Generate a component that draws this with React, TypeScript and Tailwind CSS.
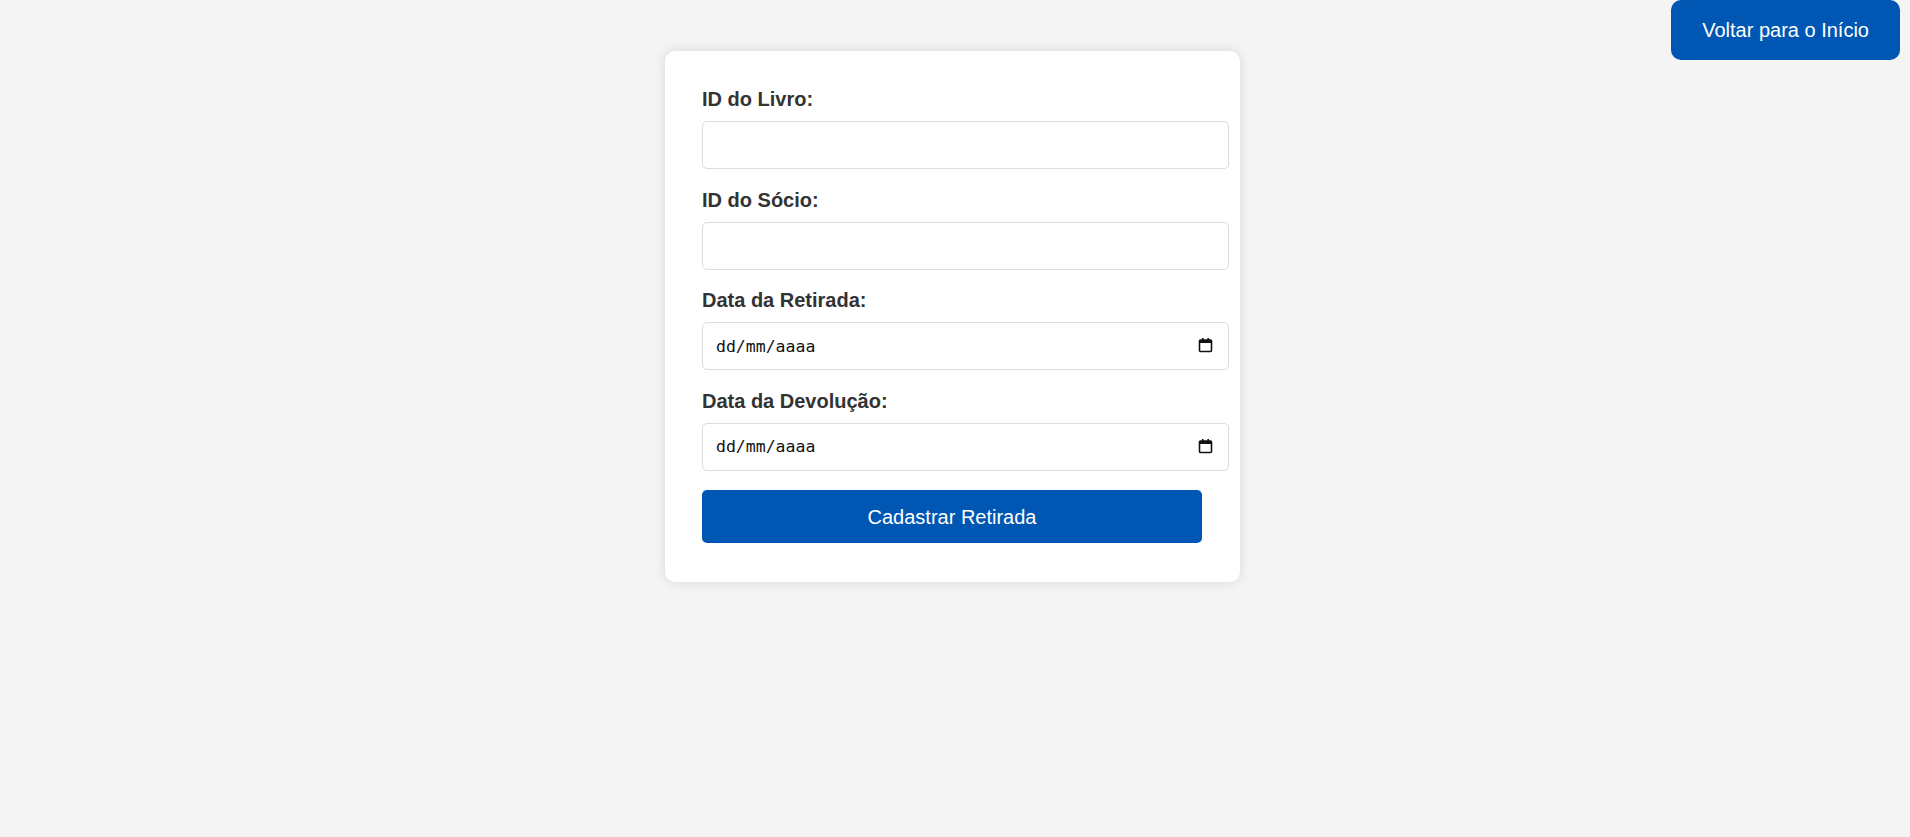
import { useState } from "react";

interface RetiradaForm {
  livroId: string;
  socioId: string;
  dataRetirada: string;
  dataDevolucao: string;
}

function CalendarIcon() {
  return (
    <svg width="15" height="16" viewBox="0 0 15 16" fill="none">
      <rect x="1.5" y="3" width="12" height="11.5" rx="1" stroke="#111" strokeWidth="1.6" />
      <rect x="1.5" y="3" width="12" height="3" fill="#111" />
      <rect x="4" y="1" width="1.6" height="3" fill="#111" />
      <rect x="9.4" y="1" width="1.6" height="3" fill="#111" />
    </svg>
  );
}

export default function App() {
  const [formData, setFormData] = useState<RetiradaForm>({
    livroId: "",
    socioId: "",
    dataRetirada: "",
    dataDevolucao: "",
  });

  const inputClass =
    "block w-[527px] h-[48px] px-[13px] border border-[#ddd] rounded-[5px] bg-white text-[17px] text-[#111] outline-none";

  const handleSubmit = (e: React.FormEvent) => {
    e.preventDefault();
  };

  return (
    <div
      className="relative min-h-[837px] bg-[#f4f4f4] pt-[51px] flex justify-center pr-[5px]"
      style={{ fontFamily: '"Liberation Sans", Arial, sans-serif' }}
    >
      <button className="absolute top-0 right-[10px] h-[60px] px-[31px] bg-[#0056b3] text-white text-[20px] rounded-[10px]">
        Voltar para o Início
      </button>

      <div className="self-start w-[575px] bg-white rounded-[10px] shadow-[0_0_12px_rgba(0,0,0,0.12)] px-[37px] pt-[37px] pb-[39px]">
        <form onSubmit={handleSubmit}>
          {/* ID do Livro */}
          <label className="block text-[20px] leading-[23px] font-bold text-[#333] mb-[10px]">
            ID do Livro:
          </label>
          <input
            type="text"
            value={formData.livroId}
            onChange={(e) => setFormData({ ...formData, livroId: e.target.value })}
            className={inputClass + " mb-[19.5px]"}
          />

          {/* ID do Sócio */}
          <label className="block text-[20px] leading-[23px] font-bold text-[#333] mb-[10px]">
            ID do Sócio:
          </label>
          <input
            type="text"
            value={formData.socioId}
            onChange={(e) => setFormData({ ...formData, socioId: e.target.value })}
            className={inputClass + " mb-[19.5px]"}
          />

          {/* Data da Retirada */}
          <label className="block text-[20px] leading-[23px] font-bold text-[#333] mb-[10px]">
            Data da Retirada:
          </label>
          <div className="relative mb-[19.5px] w-[527px]">
            <input
              type="text"
              placeholder="dd/mm/aaaa"
              value={formData.dataRetirada}
              onChange={(e) => setFormData({ ...formData, dataRetirada: e.target.value })}
              className={inputClass + " placeholder:text-[#111]"}
              style={{ fontFamily: '"DejaVu Sans Mono", monospace', fontSize: "16.5px" }}
            />
            <span className="absolute right-[16px] top-[15px]">
              <CalendarIcon />
            </span>
          </div>

          {/* Data da Devolução */}
          <label className="block text-[20px] leading-[23px] font-bold text-[#333] mb-[10px]">
            Data da Devolução:
          </label>
          <div className="relative mb-[19.5px] w-[527px]">
            <input
              type="text"
              placeholder="dd/mm/aaaa"
              value={formData.dataDevolucao}
              onChange={(e) => setFormData({ ...formData, dataDevolucao: e.target.value })}
              className={inputClass + " placeholder:text-[#111]"}
              style={{ fontFamily: '"DejaVu Sans Mono", monospace', fontSize: "16.5px" }}
            />
            <span className="absolute right-[16px] top-[15px]">
              <CalendarIcon />
            </span>
          </div>

          <button
            type="submit"
            className="block w-[500px] h-[53px] bg-[#0056b3] text-white text-[20px] rounded-[5px]"
          >
            Cadastrar Retirada
          </button>
        </form>
      </div>
    </div>
  );
}
